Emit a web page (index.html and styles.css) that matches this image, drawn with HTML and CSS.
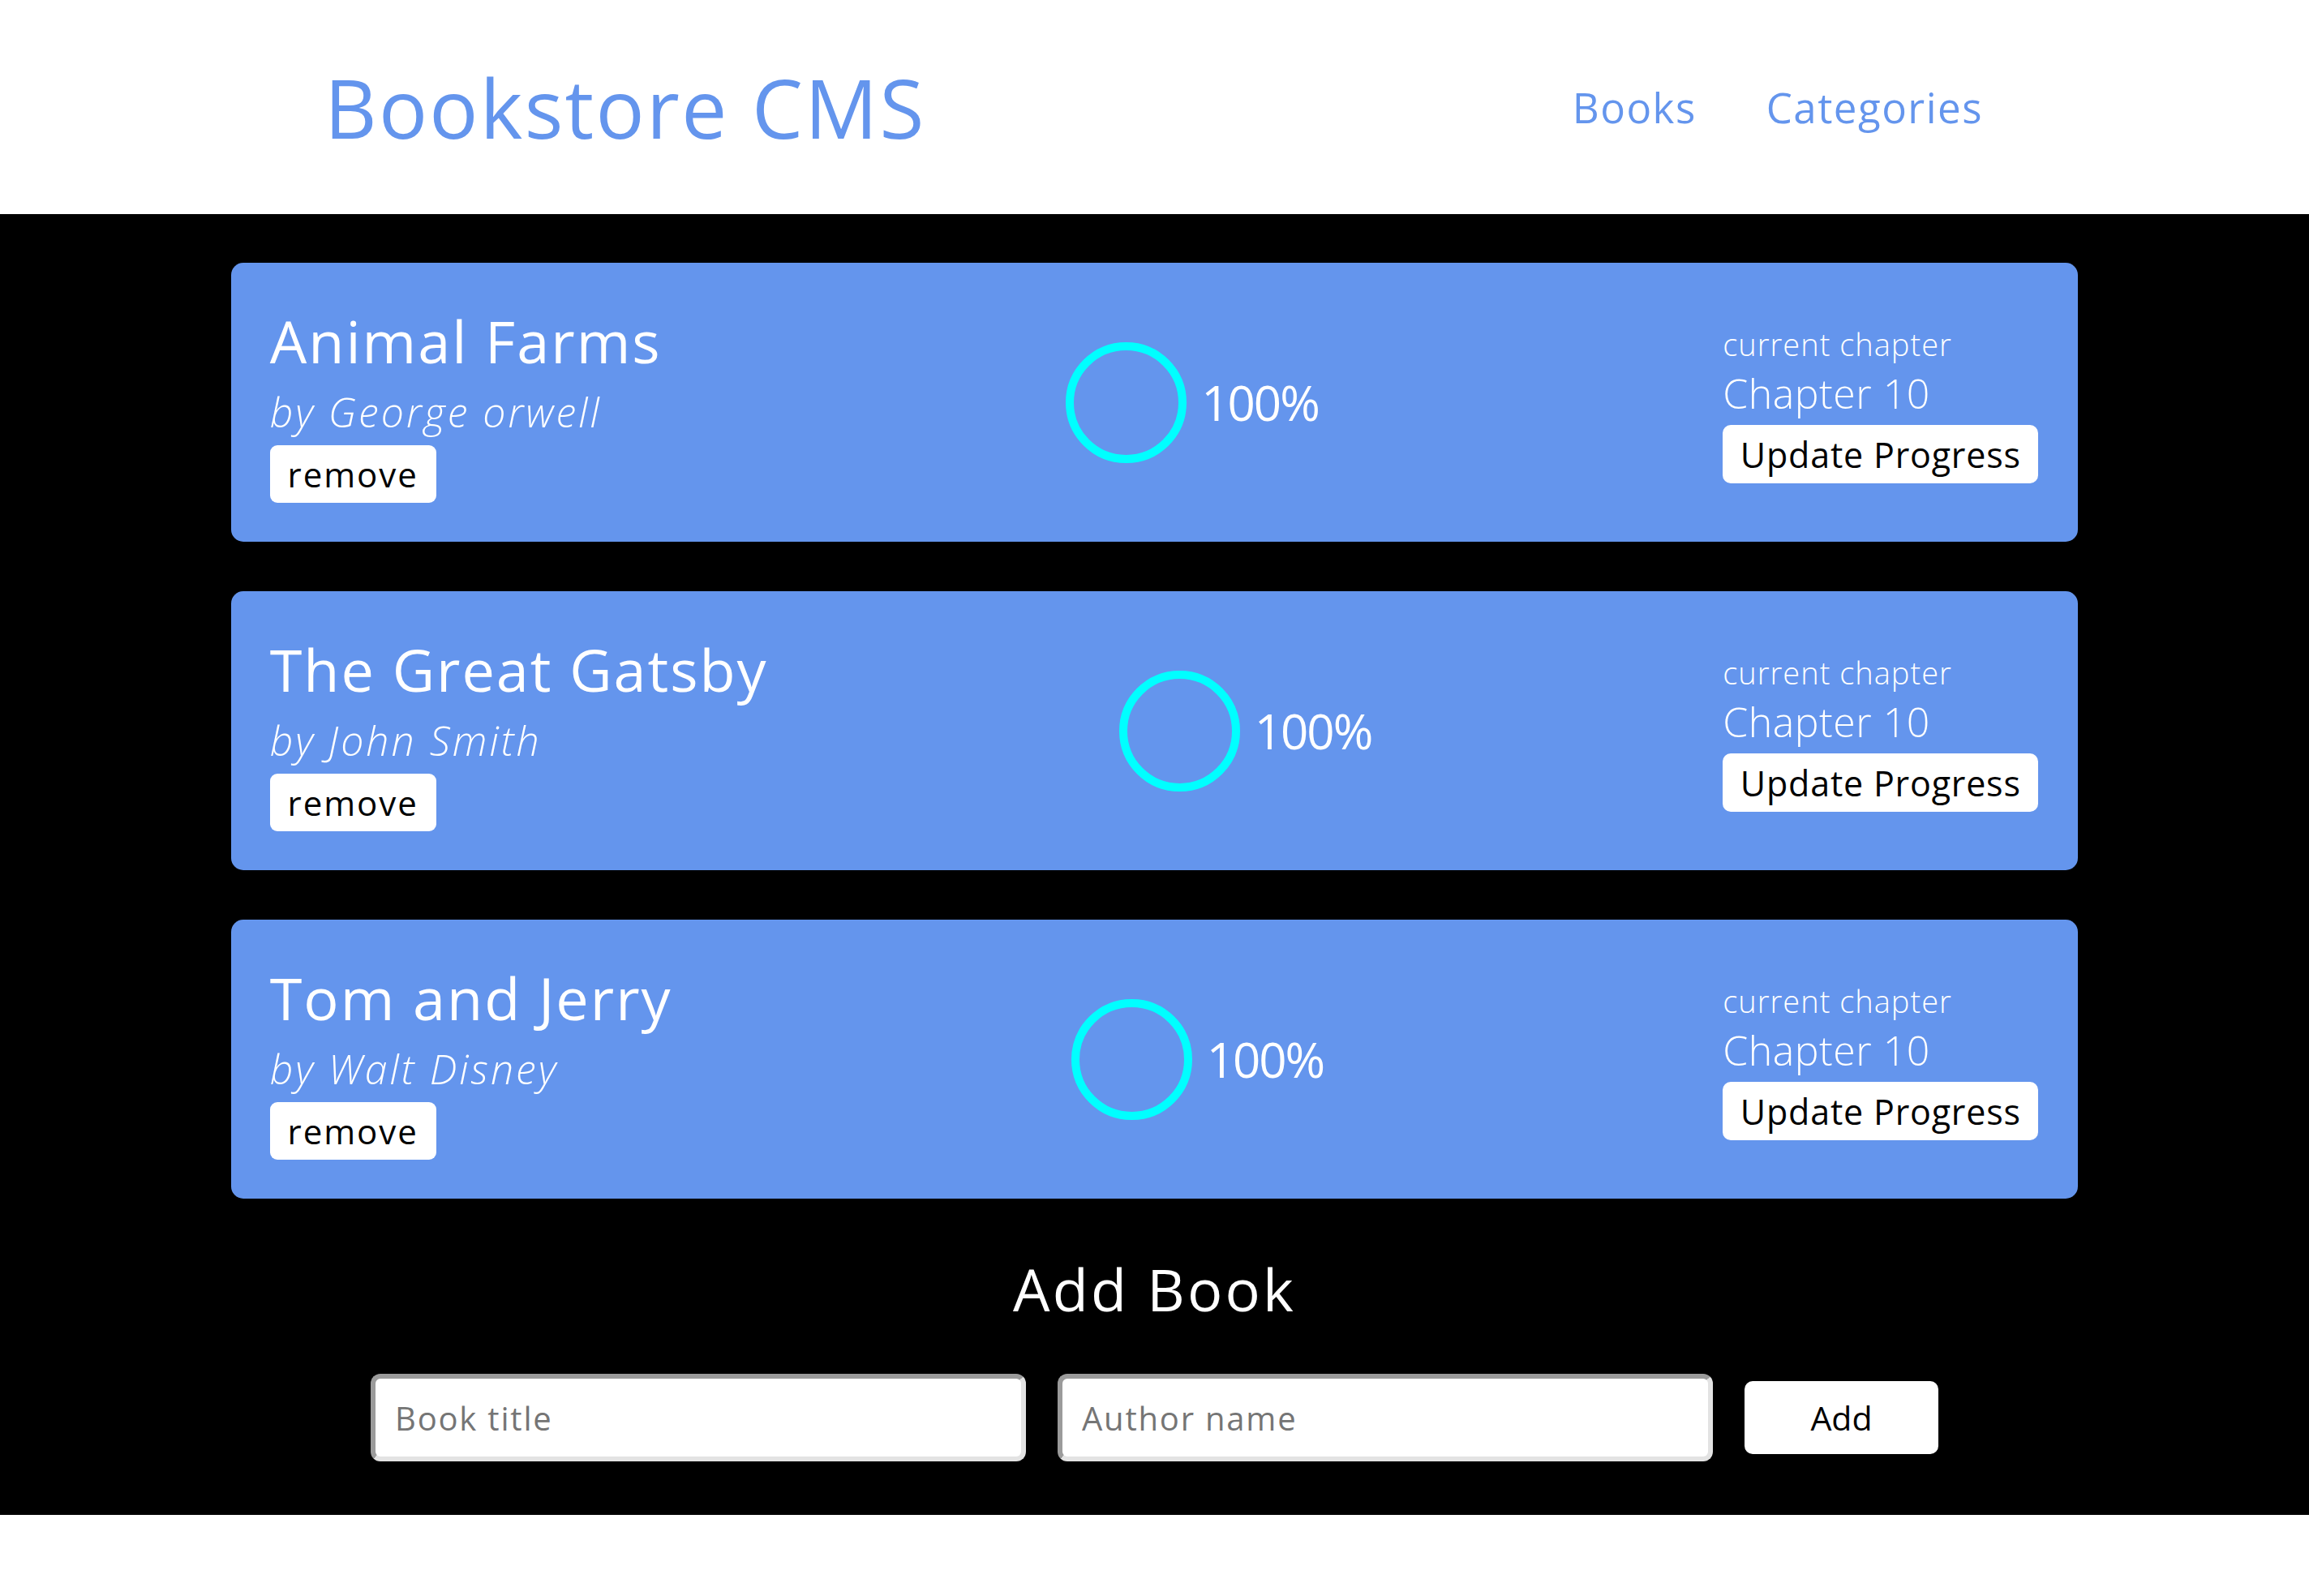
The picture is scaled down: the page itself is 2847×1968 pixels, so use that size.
FILE: index.html
```html
<!DOCTYPE html>
<html lang="en">
<head>
<meta charset="utf-8">
<title>Bookstore CMS</title>
<link rel="stylesheet" href="styles.css">
</head>
<body>
<header class="header">
  <h1 class="logo">Bookstore CMS</h1>
  <nav class="nav">
    <a class="nav-link" href="#">Books</a>
    <a class="nav-link" href="#">Categories</a>
  </nav>
</header>
<main class="main">
  <ul class="book-list">
    <li class="card">
      <div class="book-info">
        <h2 class="book-title">Animal Farms</h2>
        <p class="book-author">by George orwell</p>
        <button class="btn btn-remove" type="button">remove</button>
      </div>
      <div class="progress">
        <div class="ring"></div>
        <span class="percent">100%</span>
      </div>
      <div class="chapter">
        <p class="chapter-label">current chapter</p>
        <p class="chapter-name">Chapter 10</p>
        <button class="btn btn-update" type="button">Update Progress</button>
      </div>
    </li>
    <li class="card">
      <div class="book-info">
        <h2 class="book-title">The Great Gatsby</h2>
        <p class="book-author">by John Smith</p>
        <button class="btn btn-remove" type="button">remove</button>
      </div>
      <div class="progress">
        <div class="ring"></div>
        <span class="percent">100%</span>
      </div>
      <div class="chapter">
        <p class="chapter-label">current chapter</p>
        <p class="chapter-name">Chapter 10</p>
        <button class="btn btn-update" type="button">Update Progress</button>
      </div>
    </li>
    <li class="card">
      <div class="book-info">
        <h2 class="book-title">Tom and Jerry</h2>
        <p class="book-author">by Walt Disney</p>
        <button class="btn btn-remove" type="button">remove</button>
      </div>
      <div class="progress">
        <div class="ring"></div>
        <span class="percent">100%</span>
      </div>
      <div class="chapter">
        <p class="chapter-label">current chapter</p>
        <p class="chapter-name">Chapter 10</p>
        <button class="btn btn-update" type="button">Update Progress</button>
      </div>
    </li>
  </ul>
  <section class="add-book">
    <h2 class="add-title">Add Book</h2>
    <form class="add-form">
      <input class="field" type="text" placeholder="Book title">
      <input class="field" type="text" placeholder="Author name">
      <button class="btn btn-add" type="button">Add</button>
    </form>
  </section>
</main>
</body>
</html>
```
FILE: styles.css
```css
* {
  box-sizing: border-box;
}

html, body {
  margin: 0;
  padding: 0;
  background: #ffffff;
}

body {
  font-family: "Open Sans", "DejaVu Sans", sans-serif;
  min-height: 1968px;
}

/* Header */
.header {
  height: 264px;
  display: flex;
  align-items: center;
  justify-content: space-between;
  padding: 0 402px 0 400px;
}

.logo {
  margin: 0;
  font-size: 100px;
  line-height: 136px;
  font-weight: 400;
  color: #6495ed;
  letter-spacing: 2.3px;
}

.nav {
  display: flex;
  gap: 86px;
}

.nav-link {
  font-size: 51px;
  line-height: 70px;
  color: #6495ed;
  text-decoration: none;
  letter-spacing: 1.5px;
}

/* Main */
.main {
  background: #000000;
  padding: 60px 0 66px;
}

.book-list {
  list-style: none;
  margin: 0 auto;
  padding: 0;
  width: 80%;
  display: flex;
  flex-direction: column;
  gap: 61px;
}

.card {
  height: 344px;
  background: #6495ed;
  border-radius: 15px;
  padding: 0 49px 0 48px;
  display: flex;
  align-items: center;
  justify-content: space-between;
  color: #ffffff;
}

.book-info {
  display: flex;
  flex-direction: column;
  align-items: flex-start;
}

.book-title {
  margin: 0;
  font-size: 72px;
  line-height: 96px;
  font-weight: 400;
  letter-spacing: 2px;
}

.book-author {
  margin: 8px 0 0;
  font-size: 50px;
  line-height: 64px;
  font-style: italic;
  font-weight: 300;
  letter-spacing: 3px;
}

.btn {
  font-family: "Open Sans", "DejaVu Sans", sans-serif;
  background: #ffffff;
  color: #000000;
  border: none;
  cursor: pointer;
}

.btn-remove {
  margin-top: 9px;
  height: 71px;
  width: 205px;
  border-radius: 9px;
  font-size: 42px;
  font-weight: 500;
  letter-spacing: 2px;
  padding: 0;
}

.progress {
  display: flex;
  align-items: center;
  gap: 18px;
}

.ring {
  width: 149px;
  height: 149px;
  border-radius: 50%;
  border: 10px solid #00ffff;
}

.percent {
  font-size: 60px;
  line-height: 80px;
  font-weight: 400;
  letter-spacing: -2px;
}

.chapter {
  display: flex;
  flex-direction: column;
  align-items: flex-start;
  padding-top: 4px;
  width: 389px;
}

.chapter-label {
  margin: 0;
  font-size: 38px;
  line-height: 48px;
  font-weight: 300;
  letter-spacing: 1px;
}

.chapter-name {
  margin: 4px 0 0;
  font-size: 50px;
  line-height: 66px;
  font-weight: 300;
  letter-spacing: 0.5px;
}

.btn-update {
  margin-top: 6px;
  width: 389px;
  height: 72px;
  border-radius: 10px;
  font-size: 43px;
  font-weight: 500;
  letter-spacing: 0.8px;
  padding: 0;
}

/* Add book */
.add-book {
  display: flex;
  flex-direction: column;
  align-items: center;
}

.add-title {
  margin: 63px 0 0;
  font-size: 72px;
  line-height: 96px;
  font-weight: 400;
  color: #ffffff;
  letter-spacing: 3.2px;
}

.add-form {
  margin-top: 57px;
  display: flex;
  align-items: center;
  gap: 39px;
}

.field {
  width: 808px;
  height: 108px;
  border-width: 6px;
  border-style: solid;
  border-color: #9b9b9b #e3e3e3 #e3e3e3 #9b9b9b;
  border-radius: 12px;
  padding: 0 24px;
  font-family: "Open Sans", "DejaVu Sans", sans-serif;
  font-size: 40px;
  letter-spacing: 1.8px;
  color: #000000;
  background: #ffffff;
  outline: none;
}

.field::placeholder {
  color: #757575;
}

.btn-add {
  width: 239px;
  height: 90px;
  border-radius: 10px;
  font-size: 41px;
  font-weight: 500;
  padding: 0;
}
```
